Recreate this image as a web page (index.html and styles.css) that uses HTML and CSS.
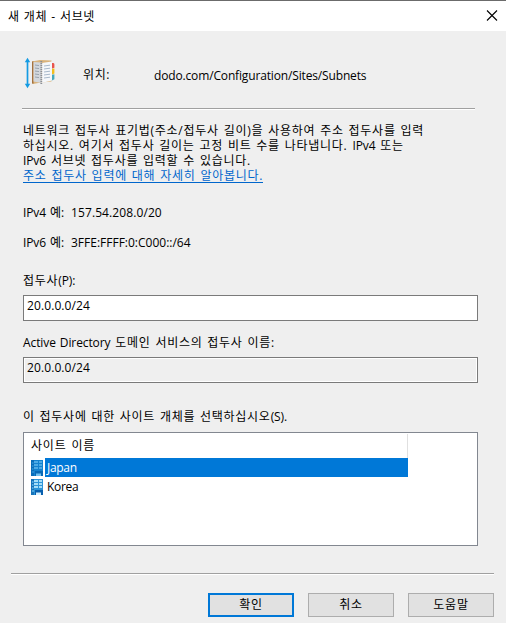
FILE: index.html
```html
<!DOCTYPE html>
<html lang="ko">

<head>
    <meta charset="UTF-8">
    <meta name="viewport" content="width=device-width, initial-scale=1.0">
    <title>새 개체 - 서브넷</title>
    <link rel="stylesheet" href="styles.css">
</head>

<body>
    <div class="dialog">
        <header class="title-bar">
            <h1>새 개체 - 서브넷</h1>
            <button class="close-btn" aria-label="닫기">
                <svg width="12" height="12" viewBox="0 0 12 12">
                    <path d="M1 0.500L11 10.500M11 0.500L1 10.500" stroke="#000" stroke-width="1.1" />
                </svg>
            </button>
        </header>

        <main class="content">
            <div class="location">
                <svg class="subnet-icon" width="32" height="32" viewBox="0 0 32 32">
                    <path d="M3.5 3V29" stroke="#149be3" stroke-width="1.7" />
                    <path d="M0.8 5.2L3.5 0.8L6.2 5.2ZM0.8 26.8L3.5 31.2L6.2 26.8Z" fill="#149be3" />
                    <path d="M27 6h2q1.4 0 1.4 1.4v3.4L27 12Z" fill="#e8544d" />
                    <path d="M27 12l3.4-.6v5L27 18Z" fill="#f2bd1d" />
                    <path d="M27 18l3.4-.8v5L27 24Z" fill="#46a9bd" />
                    <path d="M8 4.5L16 3L27.500 3.500V24.500L17 25.500L9 27Z" fill="#d9b27a" />
                    <path d="M8 4.500L9.500 4.200V26.600L8 26.800Z" fill="#a4713e" />
                    <path d="M9.500 5L17.500 5.500V26L9.500 24.500Z" fill="#d3d7dc" />
                    <path d="M17.500 6L28 4.500V23.500L17.500 26Z" fill="#f5f7fa" />
                    <path d="M11 8l4 .6M11 11l4 .6M11 14l4 .6M11 17l4 .6M11 20l4 .6" stroke="#9aa3ad" stroke-width="1" />
                    <path d="M20 9l6-.8M20 12l6-.8M20 15l6-.8M20 18l6-.8M20 21l6-.8" stroke="#a8b8ca" stroke-width="1" />
                    <path d="M17.300 4V27" stroke="#8a8f96" stroke-width="1.800" stroke-dasharray="1.200 .8" />
                </svg>
                <span class="location-label">위치:</span>
                <span class="location-path">dodo.com/Configuration/Sites/Subnets</span>
            </div>

            <hr class="divider">

            <div class="description">
                <p>네트워크 접두사 표기법(주소/접두사 길이)을 사용하여 주소 접두사를 입력</p>
                <p>하십시오. 여기서 접두사 길이는 고정 비트 수를 나타냅니다. <span class="latin">IPv4</span> 또는</p>
                <p><span class="latin">IPv6</span> 서브넷 접두사를 입력할 수 있습니다.</p>
            </div>
            <a href="#" class="learn-more">주소 접두사 입력에 대해 자세히 알아봅니다.</a>

            <div class="example"><span class="example-label">IPv4 예:</span><span class="address">157.54.208.0/20</span></div>
            <div class="example"><span class="example-label">IPv6 예:</span><span>3FFE:FFFF:0:C000::/64</span></div>

            <label class="field-label prefix-label" for="prefix">접두사<span class="latin">(P):</span></label>
            <input type="text" id="prefix" class="field" value="20.0.0.0/24">

            <label class="field-label name-label" for="prefixName"><span class="latin">Active Directory</span> 도메인 서비스의 접두사 이름:</label>
            <input type="text" id="prefixName" class="field readonly" value="20.0.0.0/24" readonly>

            <div class="field-label sites-label">이 접두사에 대한 사이트 개체를 선택하십시오<span class="latin">(S).</span></div>
            <div class="site-list">
                <div class="list-header">사이트 이름</div>
                <div class="site selected">
                    <svg class="site-icon" width="12" height="16" viewBox="0 0 12 16">
                        <path d="M0 0H12V16H0Z" fill="#1482cf" />
                        <path d="M0 0H3V16H0Z" fill="#0b6db8" />
                        <path d="M3 2h4M8 2h3M3 5h4M8 5h3M3 8h4M8 8h3" stroke="#4daae5" stroke-width="1.800" />
                        <path d="M1 3h1.500M1 6h1.500M1 9h1.500M1 12h2" stroke="#2f93d8" stroke-width="1.500" />
                        <path d="M4 11H12V16H4Z" fill="#0869b5" />
                        <path d="M5 13.500h5v2.500H5Z" fill="#6fc0f0" />
                    </svg>
                    <span class="site-name">Japan</span>
                </div>
                <div class="site">
                    <svg class="site-icon" width="12" height="16" viewBox="0 0 12 16">
                        <path d="M0 0H12V16H0Z" fill="#2b94d8" />
                        <path d="M0 0H3V16H0Z" fill="#1673b8" />
                        <path d="M3 2h4M8 2h3M3 5h4M8 5h3M3 8h4M8 8h3" stroke="#a5def8" stroke-width="1.800" />
                        <path d="M1 3h1.500M1 6h1.500M1 9h1.500M1 12h2" stroke="#62b8ea" stroke-width="1.500" />
                        <path d="M4 11H12V16H4Z" fill="#075fae" />
                        <path d="M5 13.500h5v2.500H5Z" fill="#d8f1ff" />
                    </svg>
                    <span class="site-name">Korea</span>
                </div>
            </div>
        </main>

        <footer class="actions">
            <hr class="divider">
            <div class="buttons">
                <button class="btn default">확인</button>
                <button class="btn">취소</button>
                <button class="btn">도움말</button>
            </div>
        </footer>
    </div>
</body>

</html>
```
FILE: styles.css
```css
* {
    margin: 0;
    padding: 0;
    box-sizing: border-box;
}

body {
    background-color: #efefef;
    color: #000;
    overflow: hidden;
}

body,
input,
button {
    font-family: "Open Sans", "Noto Sans CJK KR", sans-serif;
    font-size: 12px;
    line-height: 15px;
}

.dialog {
    display: flex;
    flex-direction: column;
    height: 623px;
    border-top: 1px solid #6b6b6b;
}

.title-bar {
    display: flex;
    justify-content: space-between;
    align-items: center;
    height: 30px;
    padding: 0 8px;
    background-color: #fff;
}

.title-bar h1 {
    font-size: 12px;
    font-weight: normal;
    letter-spacing: 0.6px;
    word-spacing: 0.5px;
}

.close-btn {
    display: flex;
    border: none;
    background: none;
}

.content {
    display: flex;
    flex-direction: column;
    align-items: flex-start;
    padding: 25px 28px 0 23px;
}

.location {
    display: flex;
    align-items: center;
    height: 33px;
    margin-left: 1px;
}

.location-label {
    width: 71px;
    margin-left: 27px;
    padding-top: 3px;
    letter-spacing: 0.6px;
}

.location-path {
    padding-top: 5px;
    letter-spacing: -0.15px;
}

.divider {
    width: 453px;
    height: 2px;
    border: none;
    border-top: 1px solid #a0a0a0;
    background-color: #fff;
}

.content .divider {
    margin: 19px 0 13px -1px;
}

.description,
.learn-more {
    letter-spacing: 0.74px;
    white-space: nowrap;
    word-spacing: 1px;
}

.description p {
    height: 15px;
}

.latin {
    letter-spacing: -0.1px;
    word-spacing: 1px;
}

.learn-more {
    height: 15px;
    color: #0066cc;
    text-decoration: none;
    border-bottom: 1px solid #0066cc;
}

.example {
    display: flex;
    height: 15px;
    margin-top: 15px;
}

.learn-more + .example {
    margin-top: 22px;
}

.example-label {
    width: 48px;
    letter-spacing: -0.1px;
    word-spacing: 1px;
}

.address {
    letter-spacing: 0.1px;
}

.field-label {
    height: 15px;
    letter-spacing: 0.72px;
    white-space: nowrap;
    word-spacing: 1px;
}

.prefix-label {
    margin-top: 23px;
}

.name-label {
    margin-top: 14px;
}

.sites-label {
    margin-top: 26px;
}

.field {
    width: 455px;
    height: 26px;
    margin-top: 7px;
    padding: 0 3px 5px;
    border: 1px solid #7a7a7a;
    background-color: #fff;
    outline: none;
    letter-spacing: 0.1px;
}

.field.readonly {
    background-color: #efefef;
    box-shadow: inset 0 0 0 1px #fff;
}

.site-list {
    width: 455px;
    height: 114px;
    margin-top: 8px;
    padding: 1px;
    border: 1px solid #828790;
    background-color: #fff;
}

.list-header {
    width: 383px;
    height: 24px;
    padding: 4px 6px;
    border-right: 1px solid #e0e0e0;
    letter-spacing: 0.8px;
    word-spacing: 1px;
}

.site {
    display: flex;
    align-items: center;
    width: 383px;
    height: 19px;
    padding-left: 6px;
}

.site-icon {
    margin-right: 2px;
}

.site-name {
    flex: 1;
    height: 19px;
    padding: 2px;
    letter-spacing: -0.3px;
}

.selected .site-name {
    background-color: #0078d7;
    color: #fff;
}

.actions {
    padding: 27px 12px 0 11px;
}

.actions .divider {
    width: 483px;
}

.buttons {
    display: flex;
    justify-content: flex-end;
    gap: 14px;
    margin-top: 18px;
}

.btn {
    width: 86px;
    height: 24px;
    padding-bottom: 2px;
    border: 1px solid #adadad;
    background-color: #e1e1e1;
    color: #000;
    letter-spacing: 0.8px;
}

.btn.default {
    border: 2px solid #0078d7;
}
```
